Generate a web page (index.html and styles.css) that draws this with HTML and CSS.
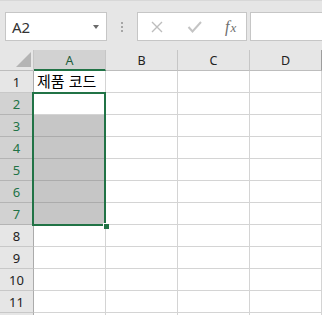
FILE: index.html
```html
<!DOCTYPE html>
<html lang="ko">
<head>
    <meta charset="UTF-8">
    <title>시트</title>
    <link rel="stylesheet" href="styles.css">
</head>
<body>
    <header class="toolbar">
        <div class="name_box">
            <span>A2</span>
            <i class="caret"></i>
        </div>
        <div class="grip"><i></i><i></i><i></i></div>
        <div class="btn_box">
            <svg class="icon" width="14" height="14" viewBox="0 0 14 14">
                <path d="M2 2 L12 12 M12 2 L2 12" stroke="#bdbdbd" stroke-width="1.4" fill="none"/>
            </svg>
            <svg class="icon" width="16" height="14" viewBox="0 0 16 14">
                <path d="M1.5 7 L5.5 11.5 L14 2" stroke="#c4c4c4" stroke-width="2" fill="none"/>
            </svg>
            <span class="fx"><span>f</span><span class="x">x</span></span>
        </div>
        <div class="formula_box"></div>
    </header>

    <main class="sheet">
        <div class="corner"><i></i></div>
        <div class="col_head sel">A</div>
        <div class="col_head">B</div>
        <div class="col_head">C</div>
        <div class="col_head last">D</div>

        <div class="row_head">1</div>
        <div class="cell text">제품 코드</div>
        <div class="cell"></div><div class="cell"></div><div class="cell"></div>

        <div class="row_head sel">2</div>
        <div class="cell"></div>
        <div class="cell"></div><div class="cell"></div><div class="cell"></div>

        <div class="row_head sel">3</div>
        <div class="cell fill"></div>
        <div class="cell"></div><div class="cell"></div><div class="cell"></div>

        <div class="row_head sel">4</div>
        <div class="cell fill"></div>
        <div class="cell"></div><div class="cell"></div><div class="cell"></div>

        <div class="row_head sel">5</div>
        <div class="cell fill"></div>
        <div class="cell"></div><div class="cell"></div><div class="cell"></div>

        <div class="row_head sel">6</div>
        <div class="cell fill"></div>
        <div class="cell"></div><div class="cell"></div><div class="cell"></div>

        <div class="row_head sel">7</div>
        <div class="cell fill"></div>
        <div class="cell"></div><div class="cell"></div><div class="cell"></div>

        <div class="row_head">8</div>
        <div class="cell"></div>
        <div class="cell"></div><div class="cell"></div><div class="cell"></div>

        <div class="row_head">9</div>
        <div class="cell"></div>
        <div class="cell"></div><div class="cell"></div><div class="cell"></div>

        <div class="row_head">10</div>
        <div class="cell"></div>
        <div class="cell"></div><div class="cell"></div><div class="cell"></div>

        <div class="row_head">11</div>
        <div class="cell"></div>
        <div class="cell"></div><div class="cell"></div><div class="cell"></div>

        <!-- 다음 행은 화면 아래로 잘림 -->
        <div class="row_head"></div>
        <div class="cell"></div>
        <div class="cell"></div><div class="cell"></div><div class="cell"></div>

        <!-- 선택 영역 테두리 -->
        <div class="selection"><i class="handle"></i></div>
    </main>
</body>
</html>
```

FILE: styles.css
```css
* {
    margin: 0;
    padding: 0;
    box-sizing: border-box;
}
body {
    width: 322px;
    height: 315px;
    overflow: hidden;
    background-color: #fff;
    font-family: "Noto Sans", "Noto Sans CJK KR", sans-serif;
    color: #333;
}
.toolbar {
    height: 50px;
    background-color: #e6e6e6;
    border-top: 1px solid #d8d8d8;
    display: flex;
    align-items: flex-start;
    padding-top: 11px;
    padding-left: 5px;
}
.name_box {
    width: 102px;
    height: 29px;
    background-color: #fff;
    border: 1px solid #c6c6c6;
    display: flex;
    align-items: center;
    justify-content: space-between;
    padding: 0 7px 0 6px;
    font-size: 15px;
    color: #333;
}
.caret {
    width: 0;
    height: 0;
    border-left: 3.5px solid transparent;
    border-right: 3.5px solid transparent;
    border-top: 4px solid #6a6a6a;
}
.grip {
    width: 30px;
    height: 29px;
    display: flex;
    flex-direction: column;
    align-items: center;
    justify-content: center;
    gap: 2px;
}
.grip i {
    width: 2px;
    height: 2px;
    background-color: #a6a6a6;
}
.btn_box {
    width: 110px;
    height: 29px;
    background-color: #fff;
    border: 1px solid #c6c6c6;
    display: flex;
    align-items: center;
    padding-left: 12px;
}
.btn_box .icon:nth-of-type(2) {
    margin-left: 23px;
}
.fx {
    margin-left: 22px;
    font-family: "Liberation Serif", serif;
    font-style: italic;
    font-size: 16px;
    color: #6e6e6e;
    display: flex;
    align-items: baseline;
}
.fx .x {
    font-size: 13px;
    margin-left: 1px;
}
.formula_box {
    flex-grow: 1;
    height: 29px;
    margin-left: 3px;
    margin-right: -1px;
    background-color: #fff;
    border: 1px solid #c6c6c6;
}
.sheet {
    position: relative;
    display: grid;
    grid-template-columns: 34px repeat(4, 72px);
    grid-template-rows: 21px repeat(12, 22px);
}
.corner {
    background-color: #e6e6e6;
    border-right: 1px solid #c6c6c6;
    border-bottom: 1px solid #bdbdbd;
    display: flex;
    justify-content: flex-end;
    align-items: flex-end;
    padding: 0 2px 3px 0;
}
.corner i {
    width: 0;
    height: 0;
    border-left: 15px solid transparent;
    border-bottom: 15px solid #b4b4b4;
}
.col_head {
    background-color: #e6e6e6;
    border-right: 1px solid #c6c6c6;
    border-bottom: 1px solid #bdbdbd;
    display: flex;
    justify-content: center;
    align-items: center;
    font-size: 12.5px;
    color: #222;
}
.col_head.sel {
    background-color: #d2d2d2;
    border-bottom: 2px solid #217346;
    color: #1e5c3a;
    padding-top: 1px;
}
.col_head.last {
    border-right-color: #9e9e9e;
}
.row_head {
    background-color: #e6e6e6;
    border-right: 1px solid #ababab;
    border-bottom: 1px solid #c8c8c8;
    display: flex;
    justify-content: center;
    align-items: center;
    font-size: 13px;
    color: #222;
}
.row_head.sel {
    background-color: #d2d2d2;
    color: #217346;
    border-bottom-color: #b4b4b4;
}
.cell {
    border-right: 1px solid #d4d4d4;
    border-bottom: 1px solid #d4d4d4;
}
.cell.fill {
    background-color: #c6c6c6;
    border-bottom-color: #ababab;
}
.cell.text {
    font-family: "Noto Sans CJK KR", sans-serif;
    font-size: 15px;
    line-height: 20px;
    padding-left: 3px;
    color: #000;
    white-space: nowrap;
}
.selection {
    position: absolute;
    left: 32px;
    top: 42px;
    width: 74px;
    height: 134px;
    border: 2px solid #217346;
}
.handle {
    position: absolute;
    right: -5px;
    bottom: -5px;
    width: 6px;
    height: 6px;
    background-color: #217346;
    border-left: 1px solid #fff;
    border-top: 1px solid #fff;
}
```
